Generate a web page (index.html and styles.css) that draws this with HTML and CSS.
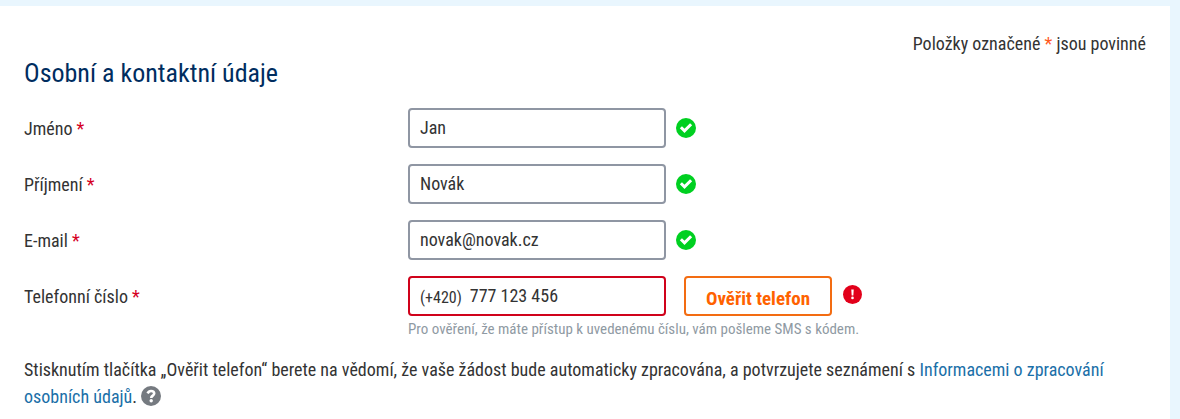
FILE: index.html
```html
<!DOCTYPE html>
<html lang="cs">
<head>
  <meta charset="UTF-8">
  <title>Osobní a kontaktní údaje</title>
  <link rel="stylesheet" href="styles.css">
</head>
<body>
  <form class="card">
    <p class="required-note">Položky označené <span>*</span> jsou povinné</p>
    <h2>Osobní a kontaktní údaje</h2>

    <div class="row">
      <label for="name">Jméno <span>*</span></label>
      <input type="text" id="name" value="Jan">
      <svg class="ok" viewBox="0 0 20 20"><circle cx="10" cy="10" r="10"/><path d="M4.9 9.3l3.6 3.6 6.6-6.6"/></svg>
    </div>
    <div class="row">
      <label for="surname">Příjmení <span>*</span></label>
      <input type="text" id="surname" value="Novák">
      <svg class="ok" viewBox="0 0 20 20"><circle cx="10" cy="10" r="10"/><path d="M4.9 9.3l3.6 3.6 6.6-6.6"/></svg>
    </div>
    <div class="row">
      <label for="email">E-mail <span>*</span></label>
      <input type="text" id="email" value="novak@novak.cz">
      <svg class="ok" viewBox="0 0 20 20"><circle cx="10" cy="10" r="10"/><path d="M4.9 9.3l3.6 3.6 6.6-6.6"/></svg>
    </div>
    <div class="row phone-row">
      <label for="phone">Telefonní číslo <span>*</span></label>
      <div class="phone">
        <span class="prefix">(+420)</span>
        <input type="text" id="phone" value="777 123 456">
      </div>
      <button type="button">Ověřit telefon</button>
      <svg class="error" viewBox="0 0 20 20"><circle cx="10" cy="10" r="10"/><path d="M8.7 4.8h2.6l-.4 6.2H9.1z"/><circle class="dot" cx="10" cy="13.6" r="1.4"/></svg>
    </div>
    <p class="hint">Pro ověření, že máte přístup k uvedenému číslu, vám pošleme SMS s kódem.</p>

    <p class="consent">Stisknutím tlačítka „Ověřit telefon“ berete na vědomí, že vaše žádost bude automaticky zpracována, a potvrzujete seznámení s <a href="#">Informacemi o zpracování<br>osobních údajů</a>. <svg class="help" viewBox="0 0 20 20"><circle cx="10" cy="10" r="10"/><path d="M6.6 7.4C7.4 5.7 8.5 5 10 5c1.900 0 3.200 1.100 3.200 2.600C13.200 9.700 10.200 9.600 10.200 12"/><circle class="dot" cx="10.200" cy="14.800" r="1.700"/></svg></p>
  </form>
</body>
</html>
```
FILE: styles.css
```css
* {
  box-sizing: border-box;
}
body {
  margin: 0;
  padding: 6px 10px 0 0;
  background: #e9f6fe;
  font-family: "Roboto Condensed", Roboto, sans-serif;
  font-stretch: 75%;
  font-size: 18px;
  color: #333;
}
.card {
  height: 413px;
  padding: 24px 24px 0;
  background: #fff;
}
p, h2 {
  margin: 0;
}
.required-note {
  text-align: right;
  line-height: 28px;
}
.required-note span {
  color: #ff5a1f;
}
h2 {
  margin-bottom: 20px;
  font-size: 26px;
  font-weight: 400;
  line-height: 30px;
  color: #002d5f;
}
.row {
  display: flex;
  align-items: center;
  height: 40px;
  margin-bottom: 16px;
}
label {
  width: 384px;
}
label span {
  color: #d5001f;
}
input, .phone {
  width: 258px;
  height: 40px;
  padding: 0 10px 2px;
  border: 2px solid #8f96a3;
  border-radius: 4px;
  background: #fff;
  font: inherit;
  color: #333;
}
.ok {
  width: 20px;
  height: 20px;
  margin-left: 10px;
  fill: #00d021;
}
.ok path {
  fill: none;
  stroke: #fff;
  stroke-width: 3;
}
.phone {
  display: flex;
  align-items: center;
  padding-bottom: 0;
  border-color: #d0021b;
}
.phone input {
  width: 160px;
  height: 34px;
  padding: 0 0 2px 8px;
  border: 0;
}
.prefix {
  padding-top: 2px;
  font-size: 16px;
}
button {
  width: 148px;
  height: 40px;
  margin-left: 18px;
  padding: 4px 0 0;
  border: 2px solid #f36c12;
  border-radius: 4px;
  background: #fff;
  font: inherit;
  font-size: 19px;
  font-weight: 700;
  color: #ff6200;
}
.error {
  width: 19px;
  height: 19px;
  margin: 0 0 3px 11px;
  fill: #e2001a;
}
.error path, .error .dot {
  fill: #fff;
}
.phone-row {
  margin-bottom: 0;
}
.hint {
  margin: 3px 0 0 384px;
  font-size: 15px;
  line-height: 20px;
  color: #8f9aa3;
}
.consent {
  margin-top: 17px;
  line-height: 27px;
}
.consent a {
  color: #1a6fa8;
  text-decoration: none;
}
.help {
  width: 20px;
  height: 20px;
  vertical-align: -3px;
  fill: #757a80;
}
.help path {
  fill: none;
  stroke: #fff;
  stroke-width: 2.6;
}
.help .dot {
  fill: #fff;
}
```
